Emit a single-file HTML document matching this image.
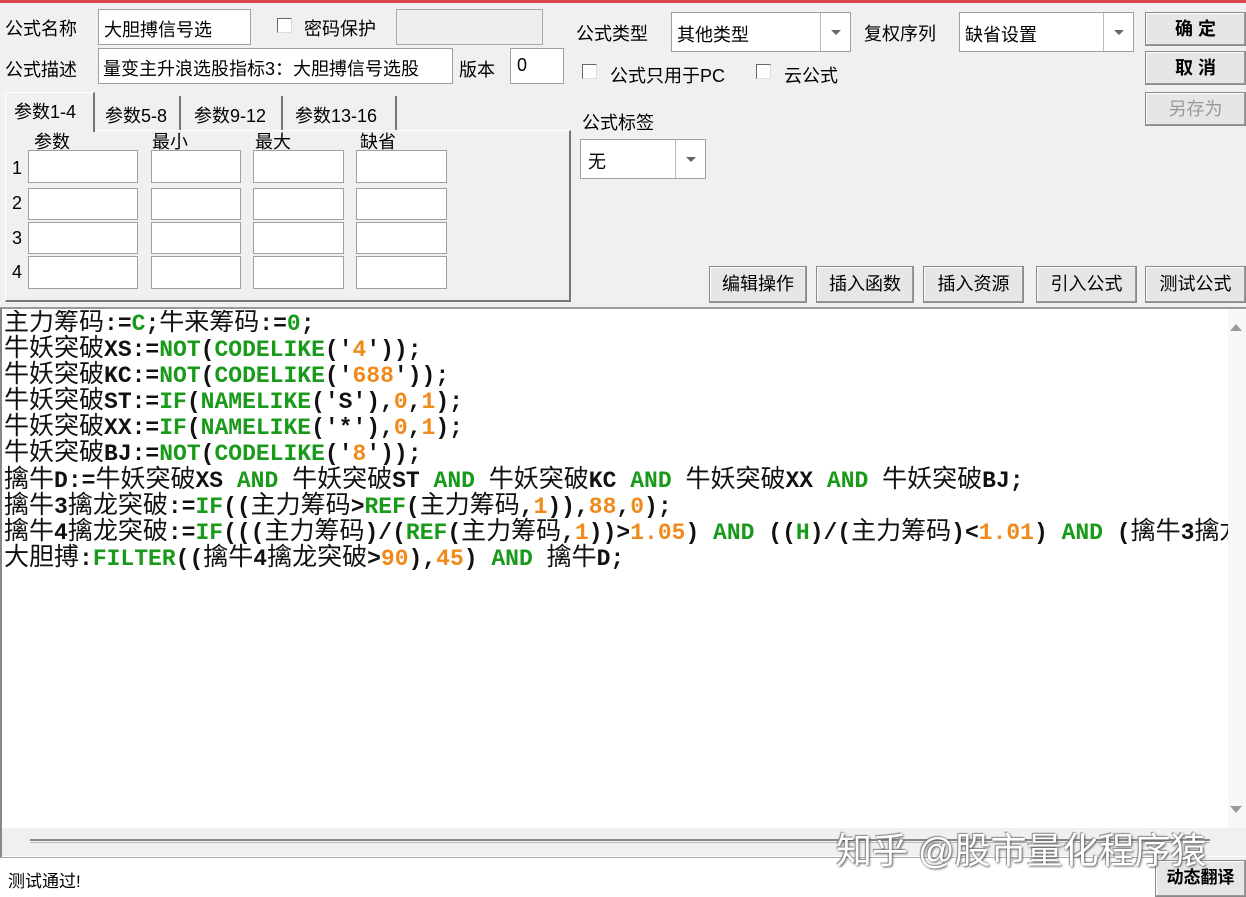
<!DOCTYPE html>
<html><head><meta charset="utf-8"><style>
*{margin:0;padding:0;box-sizing:border-box}
body{width:1246px;height:897px;background:#f0f0f0;position:relative;overflow:hidden;font-family:"Liberation Sans","Noto Sans CJK SC",sans-serif;font-size:18px;color:#000}
.a{position:absolute}
.in{position:absolute;background:#fff;border:1px solid #a0a0a0}
.lbl{position:absolute;font-size:18px;white-space:nowrap}
.cb{position:absolute;width:15px;height:15px;border:1px solid #666;background:#fff;border-right-color:#ddd;border-bottom-color:#ddd}
.btn{position:absolute;background:#e6e6e6;border:1px solid #8a8a8a;box-shadow:inset -1px -1px 0 #999,inset 1px 1px 0 #fff;font-size:18px;text-align:center}
.dd{position:absolute;right:0;top:0;bottom:0;width:30px;border-left:1px solid #bbb}
.dd:after{content:"";position:absolute;left:10px;top:17px;border:5px solid transparent;border-top:5px solid #666}
.code{position:absolute;left:4px;top:310px;font-family:"Liberation Mono","Noto Sans CJK SC",monospace;font-weight:bold;font-size:23px;color:#111}
.code div{height:26.1px;line-height:26px;white-space:pre;overflow:visible}
.code span.g{color:#1a9a1a}.code span.o{color:#f08a1a}
.cj{font-family:"Noto Sans CJK SC",sans-serif;font-weight:normal;font-size:25px;line-height:20px;display:inline-block;vertical-align:baseline}
</style></head><body>
<div class="a" style="left:0;top:0;width:1246px;height:3px;background:#d9444c"></div>
<div class="lbl" style="left:5px;top:15px">公式名称</div>
<div class="in" style="left:98px;top:9px;width:153px;height:36px"><span style="position:absolute;left:5px;top:6px">大胆搏信号选</span></div>
<div class="cb" style="left:277px;top:18px"></div>
<div class="lbl" style="left:304px;top:15px">密码保护</div>
<div class="a" style="left:396px;top:9px;width:147px;height:36px;border:1px solid #aaa;background:#eee"></div>
<div class="lbl" style="left:5px;top:56px">公式描述</div>
<div class="in" style="left:98px;top:48px;width:355px;height:36px"><span style="position:absolute;left:4px;top:6px;white-space:nowrap">量变主升浪选股指标3：大胆搏信号选股</span></div>
<div class="lbl" style="left:459px;top:56px">版本</div>
<div class="in" style="left:510px;top:48px;width:54px;height:36px"><span style="position:absolute;left:6px;top:6px">0</span></div>
<div class="a" style="left:5px;top:130px;width:566px;height:172px;border:1px solid #fff;border-right:2px solid #777;border-bottom:2px solid #777"></div>
<div class="a" style="left:5px;top:92px;width:90px;height:40px;background:#f0f0f0;border:1px solid #fff;border-right:2px solid #777;border-bottom:none"></div>
<div class="lbl" style="left:14px;top:98px">参数1-4</div>
<div class="a" style="left:97px;top:96px;width:84px;height:34px;border-right:2px solid #777"></div><div class="lbl" style="left:105px;top:102px">参数5-8</div>
<div class="a" style="left:183px;top:96px;width:100px;height:34px;border-right:2px solid #777"></div><div class="lbl" style="left:194px;top:102px">参数9-12</div>
<div class="a" style="left:285px;top:96px;width:112px;height:34px;border-right:2px solid #777"></div><div class="lbl" style="left:295px;top:102px">参数13-16</div>
<div class="lbl" style="left:34px;top:128px">参数</div><div class="lbl" style="left:152px;top:128px">最小</div><div class="lbl" style="left:255px;top:128px">最大</div><div class="lbl" style="left:360px;top:128px">缺省</div>
<div class="lbl" style="left:12px;top:158px">1</div><div class="lbl" style="left:12px;top:193px">2</div><div class="lbl" style="left:12px;top:228px">3</div><div class="lbl" style="left:12px;top:262px">4</div>
<div class="in" style="left:28px;top:150px;width:110px;height:33px"></div><div class="in" style="left:151px;top:150px;width:90px;height:33px"></div><div class="in" style="left:253px;top:150px;width:91px;height:33px"></div><div class="in" style="left:356px;top:150px;width:91px;height:33px"></div>
<div class="in" style="left:28px;top:188px;width:110px;height:32px"></div><div class="in" style="left:151px;top:188px;width:90px;height:32px"></div><div class="in" style="left:253px;top:188px;width:91px;height:32px"></div><div class="in" style="left:356px;top:188px;width:91px;height:32px"></div>
<div class="in" style="left:28px;top:222px;width:110px;height:32px"></div><div class="in" style="left:151px;top:222px;width:90px;height:32px"></div><div class="in" style="left:253px;top:222px;width:91px;height:32px"></div><div class="in" style="left:356px;top:222px;width:91px;height:32px"></div>
<div class="in" style="left:28px;top:256px;width:110px;height:33px"></div><div class="in" style="left:151px;top:256px;width:90px;height:33px"></div><div class="in" style="left:253px;top:256px;width:91px;height:33px"></div><div class="in" style="left:356px;top:256px;width:91px;height:33px"></div>
<div class="lbl" style="left:576px;top:20px">公式类型</div>
<div class="in" style="left:671px;top:12px;width:180px;height:40px"><span style="position:absolute;left:5px;top:8px">其他类型</span><div class="dd"></div></div>
<div class="lbl" style="left:864px;top:20px">复权序列</div>
<div class="in" style="left:959px;top:12px;width:175px;height:40px"><span style="position:absolute;left:5px;top:8px">缺省设置</span><div class="dd"></div></div>
<div class="cb" style="left:582px;top:64px"></div><div class="lbl" style="left:610px;top:62px">公式只用于PC</div>
<div class="cb" style="left:756px;top:64px"></div><div class="lbl" style="left:784px;top:62px">云公式</div>
<div class="lbl" style="left:582px;top:109px">公式标签</div>
<div class="in" style="left:580px;top:139px;width:126px;height:40px"><span style="position:absolute;left:7px;top:8px">无</span><div class="dd"></div></div>
<div class="btn" style="left:1145px;top:12px;width:101px;height:34px;line-height:32px;font-weight:bold">确 定</div>
<div class="btn" style="left:1145px;top:51px;width:101px;height:34px;line-height:32px;font-weight:bold">取 消</div>
<div class="btn" style="left:1145px;top:92px;width:101px;height:34px;line-height:32px;color:#999">另存为</div>
<div class="btn" style="left:709px;top:266px;width:98px;height:37px;line-height:35px">编辑操作</div>
<div class="btn" style="left:816px;top:266px;width:98px;height:37px;line-height:35px">插入函数</div>
<div class="btn" style="left:923px;top:266px;width:101px;height:37px;line-height:35px">插入资源</div>
<div class="btn" style="left:1036px;top:266px;width:101px;height:37px;line-height:35px">引入公式</div>
<div class="btn" style="left:1145px;top:266px;width:101px;height:37px;line-height:35px">测试公式</div>
<div class="a" style="left:0;top:307px;width:1246px;height:550px;background:#fff;border-top:2px solid #999;border-left:2px solid #888"></div>
<div class="a" style="left:1228px;top:310px;width:18px;height:518px;background:#f7f7f7"></div>
<div class="a" style="left:1230px;top:318px;border:6px solid transparent;border-bottom:7px solid #999"></div>
<div class="a" style="left:1230px;top:806px;border:6px solid transparent;border-top:7px solid #999"></div>
<div class="code" style="width:1224px;overflow:hidden">
<div><span class="cj">主力筹码</span>:=<span class="g">C</span>;<span class="cj">牛来筹码</span>:=<span class="g">0</span>;</div>
<div><span class="cj">牛妖突破</span>XS:=<span class="g">NOT</span>(<span class="g">CODELIKE</span>('<span class="o">4</span>'));</div>
<div><span class="cj">牛妖突破</span>KC:=<span class="g">NOT</span>(<span class="g">CODELIKE</span>('<span class="o">688</span>'));</div>
<div><span class="cj">牛妖突破</span>ST:=<span class="g">IF</span>(<span class="g">NAMELIKE</span>('S'),<span class="o">0</span>,<span class="o">1</span>);</div>
<div><span class="cj">牛妖突破</span>XX:=<span class="g">IF</span>(<span class="g">NAMELIKE</span>('*'),<span class="o">0</span>,<span class="o">1</span>);</div>
<div><span class="cj">牛妖突破</span>BJ:=<span class="g">NOT</span>(<span class="g">CODELIKE</span>('<span class="o">8</span>'));</div>
<div><span class="cj">擒牛</span>D:=<span class="cj">牛妖突破</span>XS <span class="g">AND</span> <span class="cj">牛妖突破</span>ST <span class="g">AND</span> <span class="cj">牛妖突破</span>KC <span class="g">AND</span> <span class="cj">牛妖突破</span>XX <span class="g">AND</span> <span class="cj">牛妖突破</span>BJ;</div>
<div><span class="cj">擒牛</span>3<span class="cj">擒龙突破</span>:=<span class="g">IF</span>((<span class="cj">主力筹码</span>&gt;<span class="g">REF</span>(<span class="cj">主力筹码</span>,<span class="o">1</span>)),<span class="o">88</span>,<span class="o">0</span>);</div>
<div><span class="cj">擒牛</span>4<span class="cj">擒龙突破</span>:=<span class="g">IF</span>(((<span class="cj">主力筹码</span>)/(<span class="g">REF</span>(<span class="cj">主力筹码</span>,<span class="o">1</span>))&gt;<span class="o">1.05</span>) <span class="g">AND</span> ((<span class="g">H</span>)/(<span class="cj">主力筹码</span>)&lt;<span class="o">1.01</span>) <span class="g">AND</span> (<span class="cj">擒牛</span>3<span class="cj">擒龙</span></div>
<div><span class="cj">大胆搏</span>:<span class="g">FILTER</span>((<span class="cj">擒牛</span>4<span class="cj">擒龙突破</span>&gt;<span class="o">90</span>),<span class="o">45</span>) <span class="g">AND</span> <span class="cj">擒牛</span>D;</div>
</div>
<div class="a" style="left:2px;top:828px;width:1244px;height:28px;background:#f0f0f0"></div>
<div class="a" style="left:30px;top:839px;width:1180px;height:4px;border-top:2px solid #888;border-bottom:1px solid #bbb"></div>
<div class="a" style="left:0;top:857px;width:1155px;height:40px;background:#fff;border-top:1px solid #aaa"></div>
<div class="lbl" style="left:8px;top:867px;font-size:17px">测试通过!</div>
<div class="btn" style="left:1155px;top:860px;width:91px;height:37px;line-height:34px;font-weight:bold;font-size:17px">动态翻译</div>
<div class="lbl" style="left:836px;top:822px;font-size:36px;color:#fff;text-shadow:1px 1px 2px #555,-1px -1px 1px #888">知乎 @股市量化程序猿</div>
</body></html>
